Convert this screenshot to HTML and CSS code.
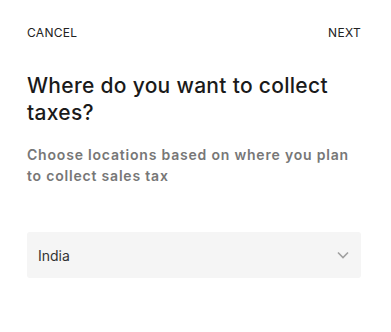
FILE: index.html
```html
<!DOCTYPE html>
<html>
<head>
<meta charset="utf-8">
<title>Tax locations</title>
<link rel="stylesheet" href="styles.css">
</head>
<body>
<div class="panel">
  <div class="top_bar">
    <a class="link_btn" href="#">CANCEL</a>
    <a class="link_btn" href="#">NEXT</a>
  </div>
  <h1 class="title">Where do you want to collect taxes?</h1>
  <p class="desc">Choose locations based on where you plan to collect sales tax</p>
  <div class="select_box">
    <span class="select_value">India</span>
    <svg class="chevron" width="12" height="8" viewBox="0 0 12 8"><path d="M1 1.5l5 5 5-5" fill="none" stroke="#a0a0a0" stroke-width="1.6"/></svg>
  </div>
</div>
</body>
</html>
```
FILE: styles.css
```css
body{margin:0;background:#fff;font-family:Inter,"Noto Sans",sans-serif;color:#222;}
.panel{padding:24px 30px 0 27px;}
.top_bar{display:flex;justify-content:space-between;align-items:center;height:16px;}
.link_btn{font-size:12px;letter-spacing:0.3px;color:#222;text-decoration:none;}
.title{margin:32px 0 0;font-size:21px;font-weight:500;line-height:27px;letter-spacing:0.3px;color:#1a1a1a;}
.desc{margin:18px 0 0;font-size:14px;font-weight:600;line-height:21px;letter-spacing:0.8px;color:#777;}
.select_box{margin-top:46px;height:46px;background:#f5f5f5;border-radius:3px;display:flex;align-items:center;justify-content:space-between;padding:0 12px 0 11px;}
.select_value{font-size:14px;color:#333;}
.chevron{display:block;}
```
